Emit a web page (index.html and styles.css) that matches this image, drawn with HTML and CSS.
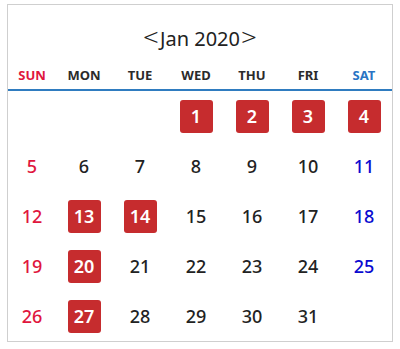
FILE: index.html
```html
<!DOCTYPE html>
<html>
<head>
<meta charset="utf-8">
<link rel="stylesheet" href="styles.css">
</head>
<body>
<div class="calendar">
  <div class="title"><span class="nav">&lt;</span>Jan 2020<span class="nav">&gt;</span></div>
  <div class="weekdays">
    <div class="sun">SUN</div><div>MON</div><div>TUE</div><div>WED</div><div>THU</div><div>FRI</div><div class="sat">SAT</div>
  </div>
  <div class="days">
    <div class="day"></div><div class="day"></div><div class="day"></div>
    <div class="day"><span class="mark">1</span></div>
    <div class="day"><span class="mark">2</span></div>
    <div class="day"><span class="mark">3</span></div>
    <div class="day"><span class="mark">4</span></div>
    <div class="day sun">5</div><div class="day">6</div><div class="day">7</div><div class="day">8</div><div class="day">9</div><div class="day">10</div><div class="day sat">11</div>
    <div class="day sun">12</div><div class="day"><span class="mark">13</span></div><div class="day"><span class="mark">14</span></div><div class="day">15</div><div class="day">16</div><div class="day">17</div><div class="day sat">18</div>
    <div class="day sun">19</div><div class="day"><span class="mark">20</span></div><div class="day">21</div><div class="day">22</div><div class="day">23</div><div class="day">24</div><div class="day sat">25</div>
    <div class="day sun">26</div><div class="day"><span class="mark">27</span></div><div class="day">28</div><div class="day">29</div><div class="day">30</div><div class="day">31</div><div class="day"></div>
  </div>
</div>
</body>
</html>
```
FILE: styles.css
```css
html, body {
  margin: 0;
  padding: 0;
  background: #fff;
}
body {
  padding: 4px 0 0 7px;
  font-family: "Noto Sans", "Open Sans", sans-serif;
  color: #222;
}
.calendar {
  width: 384px;
  height: 336px;
  border: 1px solid #cfcfcf;
  display: flex;
  flex-direction: column;
}
.title {
  margin-top: 18px;
  height: 28px;
  line-height: 28px;
  text-align: center;
  font-size: 20px;
  font-weight: 400;
  color: #222;
}
.nav {
  font-size: 24px;
  font-weight: 300;
  display: inline-block;
  transform: scaleX(1.15);
  padding: 0 2px;
}
.weekdays {
  margin-top: 10px;
  display: grid;
  grid-template-columns: 48px repeat(6, 56px);
  height: 28px;
  line-height: 28px;
  border-bottom: 2px solid #2f7cc0;
  font-size: 13px;
  font-weight: 700;
  text-align: center;
  color: #2b2b2b;
}
.weekdays .sun { color: #e0163d; }
.weekdays .sat { color: #2a74c4; }
.days {
  display: grid;
  grid-template-columns: 48px repeat(6, 56px);
  grid-auto-rows: 50px;
}
.day {
  display: flex;
  align-items: center;
  justify-content: center;
  font-size: 18px;
  font-weight: 500;
  color: #222;
}
.day.sun { color: #e0163d; }
.day.sat { color: #0a0ad0; }
.mark {
  width: 33px;
  height: 33px;
  border-radius: 3px;
  background: #c62c2e;
  color: #fff;
  font-weight: 600;
  display: flex;
  align-items: center;
  justify-content: center;
}
```
